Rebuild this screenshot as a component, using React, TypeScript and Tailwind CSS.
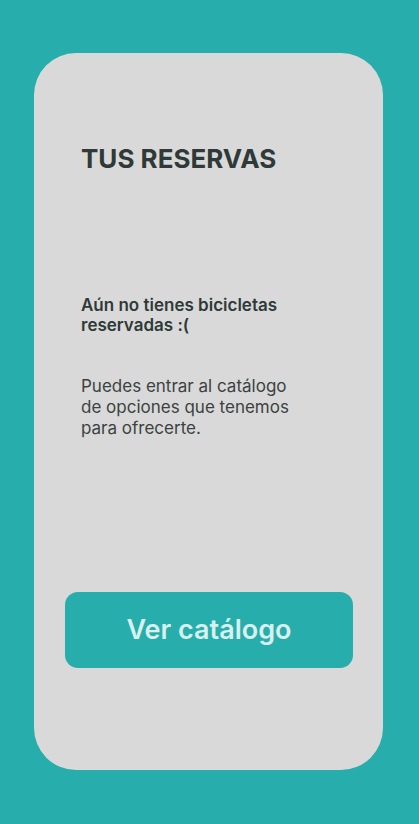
export default function App() {
  return (
    <div className="min-h-[824px] w-full bg-[#27adab] px-[34px] pt-[53px] pb-[54px] font-['Inter',sans-serif]">
      <div className="flex h-[717px] w-[349px] flex-col rounded-[42px] bg-[#d9d9d9] pt-[90px] pl-[47px] pr-[30px]">
        <h1 className="text-[26px] leading-[32px] font-bold text-[#2f3a38]">TUS RESERVAS</h1>

        <p className="mt-[120px] w-[220px] text-[17px] leading-[20px] font-semibold text-[#2f3a38]">
          Aún no tienes bicicletas reservadas :(
        </p>

        <p className="mt-[41px] w-[230px] text-[17px] leading-[21px] text-[#3b4241]">
          Puedes entrar al catálogo de opciones que tenemos para ofrecerte.
        </p>

        <button className="mt-auto mb-[102px] -ml-[16px] flex h-[76px] w-[288px] items-center justify-center rounded-[13px] bg-[#27adab] text-[27px] font-semibold text-[#d8f0ee]">
          Ver catálogo
        </button>
      </div>
    </div>
  );
}
